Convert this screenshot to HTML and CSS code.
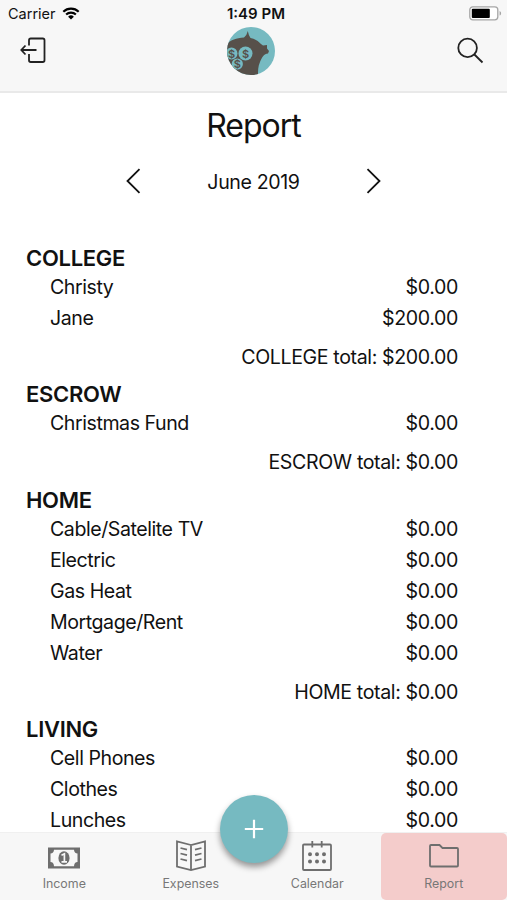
FILE: index.html
```html
<!DOCTYPE html>
<html lang="en">
<head>
    <meta charset="UTF-8">
    <meta name="viewport" content="width=device-width, initial-scale=1.0">
    <title>Report</title>
    <link rel="stylesheet" href="styles.css">
</head>
<body>

<div class="app">
    <header>
        <div class="status-bar">
            <div class="carrier">
                <span>Carrier</span>
                <svg width="18" height="13" viewBox="0 0 18 13">
                    <path d="M1.3 4.8a11 11 0 0 1 15.4 0M4.1 7.6a7 7 0 0 1 9.8 0" fill="none" stroke="#000" stroke-width="2.1"/>
                    <path d="M9 12.6L6.1 9.7a4.1 4.1 0 0 1 5.8 0z"/>
                </svg>
            </div>
            <div class="time">1:49 PM</div>
            <div class="battery">
                <svg width="33" height="15" viewBox="0 0 33 15">
                    <rect x=".8" y=".8" width="28" height="13" rx="3" fill="#fff" stroke="#a5a5a5" stroke-width="1.3"/>
                    <rect x="2.8" y="2.7" width="18" height="9.2" rx="1"/>
                    <path d="M30.6 5v4.6c2-.8 2-3.8 0-4.6z" fill="#a5a5a5"/>
                </svg>
            </div>
        </div>
        <div class="toolbar">
            <svg class="icon" width="27" height="27" viewBox="0 0 27 27">
                <path d="M9 8.5V3.2Q9 1.5 10.7 1.5H22.8Q24.5 1.5 24.5 3.2V23.3Q24.5 25 22.8 25H10.7Q9 25 9 23.3V17M16.5 13H1.5M5.500 8.500L1.300 13L5.500 17.500"/>
            </svg>
            <svg class="logo" width="48" height="48" viewBox="0 0 48 48">
                <clipPath id="round"><circle cx="24" cy="24" r="24"/></clipPath>
                <g clip-path="url(#round)">
                    <rect width="48" height="48" fill="#76bac1"/>
                    <path d="M0 17C4 13 9 11 17 10.500Q20 8 20.800 4Q21.500 8 23.500 11C28 12 31 14 34 17L36 18.500L40 18L40 21.500L42 24L41 26.500C37 27 35 30 33 35C31 39 31 44 31 48H0z" fill="#57504a"/>
                    <g class="coins">
                        <circle cx="4.500" cy="26.500" r="6"/>
                        <circle cx="18.500" cy="26.500" r="7"/>
                        <circle cx="10.300" cy="37" r="5.600"/>
                    </g>
                    <g class="dollars">
                        <text x="4.700" y="30.500">$</text>
                        <text x="18.500" y="30.500">$</text>
                        <text x="10.300" y="41">$</text>
                    </g>
                </g>
            </svg>
            <svg class="icon" width="27" height="27" viewBox="0 0 27 27">
                <circle cx="10.600" cy="10.900" r="9.300"/>
                <path d="M17.400 17.500L25.500 25.500"/>
            </svg>
        </div>
    </header>

    <main>
        <h1>Report</h1>
        <div class="month-picker">
            <svg class="arrow" width="15" height="26" viewBox="0 0 15 26"><path d="M13.500 1.200L1.500 13L13.500 24.800"/></svg>
            <span>June 2019</span>
            <svg class="arrow" width="15" height="26" viewBox="0 0 15 26"><path d="M1.500 1.200L13.500 13L1.500 24.800"/></svg>
        </div>

        <section>
            <h2>COLLEGE</h2>
            <div class="row"><span>Christy</span><span>$0.00</span></div>
            <div class="row"><span>Jane</span><span>$200.00</span></div>
            <div class="total">COLLEGE total: $200.00</div>
        </section>
        <section>
            <h2>ESCROW</h2>
            <div class="row"><span>Christmas Fund</span><span>$0.00</span></div>
            <div class="total">ESCROW total: $0.00</div>
        </section>
        <section>
            <h2>HOME</h2>
            <div class="row"><span>Cable/Satelite TV</span><span>$0.00</span></div>
            <div class="row"><span>Electric</span><span>$0.00</span></div>
            <div class="row"><span>Gas Heat</span><span>$0.00</span></div>
            <div class="row"><span>Mortgage/Rent</span><span>$0.00</span></div>
            <div class="row"><span>Water</span><span>$0.00</span></div>
            <div class="total">HOME total: $0.00</div>
        </section>
        <section>
            <h2>LIVING</h2>
            <div class="row"><span>Cell Phones</span><span>$0.00</span></div>
            <div class="row"><span>Clothes</span><span>$0.00</span></div>
            <div class="row"><span>Lunches</span><span>$0.00</span></div>
        </section>
    </main>

    <nav>
        <div class="tab">
            <svg width="32" height="32" viewBox="0 0 32 32">
                <path d="M0 7.500H32V28.500H0zM6 9.800C6 12 4.500 13.500 2.500 13.500V22C4.500 22 6 23.500 6 26.200H26C26 23.500 27.500 22 29.500 22V13.500C27.500 13.500 26 12 26 9.800z" fill="#6e6e6e" fill-rule="evenodd"/>
                <ellipse cx="16" cy="18" rx="5.600" ry="6.700" fill="#6e6e6e"/>
                <path d="M13.500 15.300L16.400 13.800V21.500M13.500 21.800H19" fill="none" stroke="#f7f7f7" stroke-width="1.700"/>
            </svg>
            <span>Income</span>
        </div>
        <div class="tab">
            <svg class="line" width="32" height="32" viewBox="0 0 32 32">
                <path d="M16 5L2 1.500V26.500L16 30L30 26.500V1.500zM16 5V30M5.500 8L12 9.700M5.500 13.500L12 15.200M5.500 19L12 20.700M26.500 8L20 9.700M26.500 13.500L20 15.200M26.500 19L20 20.700"/>
            </svg>
            <span>Expenses</span>
        </div>
        <div class="tab">
            <svg class="line" width="32" height="32" viewBox="0 0 32 32">
                <rect x="2" y="4.500" width="28" height="25.500" rx="1"/>
                <path d="M11.300 1V7.500M20.700 1V7.500"/>
                <path class="dots" d="M9 14.200h0M16 14.200h0M23 14.200h0M9 21.500h0M16 21.500h0M23 21.500h0"/>
            </svg>
            <span>Calendar</span>
        </div>
        <div class="tab active">
            <svg class="line" width="32" height="32" viewBox="0 0 32 32">
                <path d="M2 6Q2 5 3 5H11.500L14.500 8H29Q30 8 30 9V25.500Q30 26.500 29 26.500H3Q2 26.500 2 25.500z"/>
            </svg>
            <span>Report</span>
        </div>
        <div class="add">
            <svg width="20" height="20" viewBox="0 0 20 20"><path d="M10 .8V19.200M.8 10H19.200" stroke="#fff" stroke-width="2.200"/></svg>
        </div>
    </nav>
</div>

</body>
</html>
```

FILE: styles.css
```css
* {
    box-sizing: border-box;
}
body {
    margin: 0;
    font-family: Inter, "Liberation Sans", sans-serif;
    font-size: 19.6px;
    letter-spacing: -0.38px;
    color: #111;
    background-color: #fff;
}
.app {
    display: flex;
    flex-direction: column;
    height: 900px;
    overflow: hidden;
}
header {
    height: 93px;
    flex-shrink: 0;
    background-color: #f7f7f7;
    border-bottom: 2px solid #e9e9e9;
}
.status-bar {
    display: grid;
    grid-template-columns: 1fr auto 1fr;
    align-items: center;
    height: 27px;
    padding: 0 5px 0 8px;
    font-size: 14.5px;
    letter-spacing: 0;
}
.carrier {
    display: flex;
    align-items: center;
    gap: 6px;
}
.time {
    padding-left: 2px;
    font-size: 15px;
    font-weight: 600;
}
.battery {
    display: flex;
    justify-content: flex-end;
}
.toolbar {
    display: flex;
    justify-content: space-between;
    align-items: center;
    height: 48px;
    padding: 0 23px 0 20px;
}
.logo {
    margin-right: 2px;
}
.icon {
    margin-bottom: 2px;
    fill: none;
    stroke: #222;
    stroke-width: 1.8;
}
.coins {
    fill: #76bac1;
}
.dollars {
    fill: #57504a;
    font-size: 11px;
    font-weight: 600;
    letter-spacing: 0;
    text-anchor: middle;
}
main {
    flex: 1;
    min-height: 0;
    overflow: hidden;
}
h1 {
    margin: 13px 0 0;
    font-size: 32px;
    font-weight: 400;
    line-height: 40px;
    text-align: center;
    letter-spacing: -1px;
}
.month-picker {
    display: flex;
    justify-content: space-between;
    align-items: center;
    width: 255px;
    height: 30px;
    margin: 21px auto 48px;
}
.arrow {
    margin-bottom: 2px;
    fill: none;
    stroke: #111;
    stroke-width: 1.8;
}
section {
    padding: 0 49px 0 26px;
    margin-bottom: 8.3px;
}
h2 {
    margin: 0 0 1px;
    font-size: 22px;
    font-weight: 600;
    line-height: 26px;
    letter-spacing: -0.3px;
}
.row {
    display: flex;
    justify-content: space-between;
    padding-left: 24px;
    line-height: 31px;
}
.row span:first-child {
    letter-spacing: -0.45px;
}
.total {
    margin-top: 8px;
    line-height: 31px;
    text-align: right;
}
nav {
    position: relative;
    display: flex;
    height: 68px;
    padding-left: 1px;
    flex-shrink: 0;
    background-color: #f7f7f7;
    border-top: 1px solid #f0f0f0;
}
.tab {
    flex: 1;
    display: flex;
    flex-direction: column;
    align-items: center;
    padding-top: 7px;
    font-size: 12.4px;
    line-height: 20px;
    letter-spacing: 0;
    color: #777;
}
.tab span {
    margin-top: 2px;
}
.active {
    background-color: #f4cccb;
    border-radius: 5px;
}
.line {
    fill: none;
    stroke: #6e6e6e;
    stroke-width: 1.8;
}
.dots {
    stroke-width: 4;
    stroke-linecap: round;
}
.add {
    position: absolute;
    left: 220px;
    top: -38px;
    display: flex;
    justify-content: center;
    align-items: center;
    width: 68px;
    height: 68px;
    border-radius: 50%;
    background-color: #76bac1;
    box-shadow: 0 4px 6px rgba(0, 0, 0, 0.4);
}
```
